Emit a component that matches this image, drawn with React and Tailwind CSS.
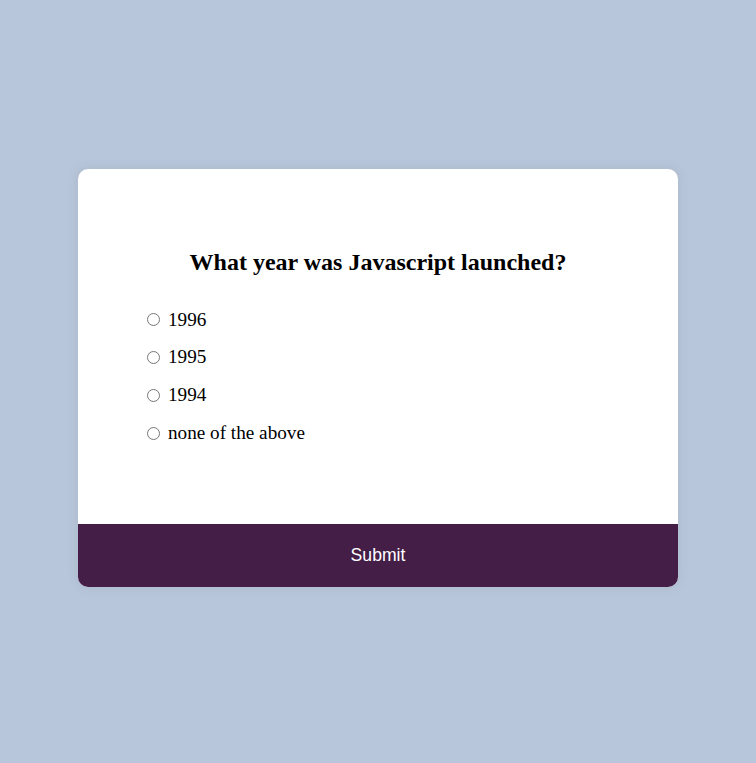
import React from "react";

export default function App() {
  const options = ["1996", "1995", "1994", "none of the above"];
  return (
    <div className="min-h-screen w-full bg-[#b8c6db] flex justify-center pt-[169px]" style={{ fontFamily: '"Liberation Serif", "Times New Roman", serif' }}>
      <div className="w-[600px] h-fit bg-white rounded-[10px] overflow-hidden shadow-[0_0_10px_2px_rgba(100,100,100,0.1)]">
        <div className="p-[64px]">
          <h2 className="p-[16px] text-center text-[24px] font-bold leading-[27.6px] text-black">
            What year was Javascript launched?
          </h2>
          <ul className="mt-[16px] mb-[17px] list-none p-0">
            {options.map((o, i) => (
              <li key={o} className="my-[16px] text-[19.2px] leading-[21.7px] text-black flex items-center">
                <input type="radio" name="answer" id={"a" + i} className="w-[13px] h-[13px] ml-[5px] mr-[3px] mt-[1px] accent-[#767676]" />
                <label htmlFor={"a" + i} className="ml-[5px]">{o}</label>
              </li>
            ))}
          </ul>
        </div>
        <button
          className="block w-full bg-[#441e47] text-white text-[17.6px] leading-[21px] py-[21px] border-0"
          style={{ fontFamily: '"Liberation Sans", Arial, sans-serif' }}
        >
          Submit
        </button>
      </div>
    </div>
  );
}
